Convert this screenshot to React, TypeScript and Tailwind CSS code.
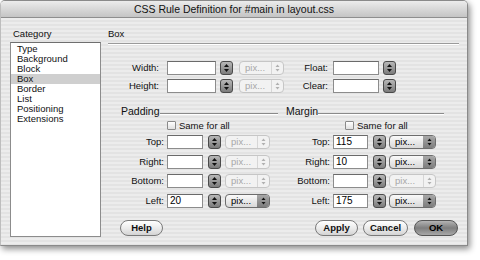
import React from 'react';

const categories = ['Type', 'Background', 'Block', 'Box', 'Border', 'List', 'Positioning', 'Extensions'];

function Spinner() {
  return (
    <div className="w-[13px] h-[14px] shrink-0 rounded-[3px] border border-[#4a4a4a] bg-gradient-to-b from-[#b8b8b8] to-[#7c7c7c] flex items-center justify-center">
      <svg width="7" height="10" viewBox="0 0 7 10">
        <path d="M3.5 1 L6 4 L1 4 Z" fill="#111" />
        <path d="M3.5 9 L6 6 L1 6 Z" fill="#111" />
      </svg>
    </div>
  );
}

function Select({ enabled, w }: { enabled: boolean; w: string }) {
  return (
    <div
      className={`${w} h-[14px] shrink-0 rounded-[4px] border flex items-center ${
        enabled
          ? 'border-[#6d6d6d] bg-gradient-to-b from-[#fafafa] to-[#d8d8d8] text-black'
          : 'border-[#c6c6c6] bg-[#f2f2f2] text-[#a8a8a8]'
      }`}
    >
      <span className="flex-1 pl-[5px] text-[9.5px] leading-none">pix...</span>
      <div
        className={`w-[12px] h-full rounded-r-[3px] flex items-center justify-center ${
          enabled ? 'bg-gradient-to-b from-[#a8a8a8] to-[#7d7d7d]' : 'border-l border-[#d6d6d6]'
        }`}
      >
        <svg width="5" height="8" viewBox="0 0 5 8">
          <path d="M2.5 0.5 L4.5 3 L0.5 3 Z" fill={enabled ? '#111' : '#b0b0b0'} />
          <path d="M2.5 7.5 L4.5 5 L0.5 5 Z" fill={enabled ? '#111' : '#b0b0b0'} />
        </svg>
      </div>
    </div>
  );
}

function TextBox({ w, value }: { w: string; value?: string }) {
  return (
    <div className={`${w} h-[14px] shrink-0 bg-white border border-[#8c8c8c] border-t-[#6a6a6a] pl-[2px] text-[10px] leading-[12px] text-black`}>
      {value}
    </div>
  );
}

function Label({ w, text }: { w: string; text: string }) {
  return <div className={`${w} shrink-0 text-right text-[9.5px] leading-[14px] text-[#111]`}>{text}</div>;
}

function Button({ w, text, primary }: { w: string; text: string; primary?: boolean }) {
  return (
    <div
      className={`${w} h-[16px] rounded-full border flex items-center justify-center text-[9.5px] font-bold ${
        primary
          ? 'border-[#555] bg-gradient-to-b from-[#b4b4b4] via-[#7e7e7e] to-[#a8a8a8] text-black'
          : 'border-[#7a7a7a] bg-gradient-to-b from-[#ffffff] via-[#ececec] to-[#d4d4d4] text-[#111]'
      }`}
    >
      {text}
    </div>
  );
}

function BoxRow({ label, rowClass, padding, margin }: { label: string; rowClass: string; padding?: string; margin?: string }) {
  const padOn = padding !== undefined;
  const marOn = margin !== undefined;
  return (
    <div className={`flex items-center ${rowClass}`}>
      <Label w="w-[56px]" text={label} />
      <div className="w-[3px]" />
      <TextBox w="w-[36px]" value={padding} />
      <div className="w-[5px]" />
      <Spinner />
      <div className="w-[4px]" />
      <Select enabled={padOn} w="w-[45px]" />
      <div className="w-[7px]" />
      <Label w="w-[53px]" text={label} />
      <div className="w-[3px]" />
      <TextBox w="w-[35px]" value={margin} />
      <div className="w-[5px]" />
      <Spinner />
      <div className="w-[3px]" />
      <Select enabled={marOn} w="w-[47px]" />
    </div>
  );
}

export default function App() {
  return (
    <div className="w-[480px] h-[260px] bg-white font-['Liberation_Sans',Arial,sans-serif] overflow-hidden">
      <div className="w-[468px] h-[246px] flex flex-col border border-[#8a8a8a] border-l-[#bdbdbd] rounded-t-[5px] shadow-[2px_3px_6px_rgba(0,0,0,0.45)] overflow-hidden">
        {/* Title bar */}
        <div className="h-[17px] shrink-0 bg-gradient-to-b from-[#ececec] to-[#c4c4c4] border-b border-[#8e8e8e] flex items-center justify-center">
          <span className="text-[10.5px] leading-none text-[#111]">CSS Rule Definition for #main in layout.css</span>
        </div>

        {/* Body */}
        <div className="flex-1 flex bg-[#e9e9e9] bg-[image:repeating-linear-gradient(to_bottom,#ececec_0px,#ececec_2px,#e3e3e3_2px,#e3e3e3_4px)]">
          {/* Category */}
          <div className="ml-[9px] w-[91px] pt-[10px] flex flex-col">
            <div className="pl-[3px] h-[12px] text-[9.5px] leading-[12px] text-[#111]">Category</div>
            <div className="mt-[2px] h-[195px] bg-white border border-[#8c8c8c] border-t-[#6f6f6f] pt-[1px]">
              {categories.map((c) => (
                <div
                  key={c}
                  className={`h-[10px] pl-[6px] text-[9.5px] leading-[10px] text-[#111] ${c === 'Box' ? 'bg-[#cfcfcf]' : ''}`}
                >
                  {c}
                </div>
              ))}
            </div>
          </div>

          {/* Box panel */}
          <div className="ml-[7px] w-[351px] pt-[10px] flex flex-col">
            <div className="h-[12px] text-[9.5px] leading-[12px] text-[#111]">Box</div>
            <div className="mt-[3px] h-[2px] border-t border-[#9a9a9a] border-b border-b-white" />

            {/* Width / Height / Float / Clear */}
            <div className="mt-[16px] flex items-center">
              <Label w="w-[51px]" text="Width:" />
              <div className="w-[8px]" />
              <TextBox w="w-[49px]" />
              <div className="w-[4px]" />
              <Spinner />
              <div className="w-[6px]" />
              <Select enabled={false} w="w-[45px]" />
              <Label w="w-[44px]" text="Float:" />
              <div className="w-[5px]" />
              <TextBox w="w-[46px]" />
              <div className="w-[4px]" />
              <Spinner />
            </div>
            <div className="mt-[4px] flex items-center">
              <Label w="w-[51px]" text="Height:" />
              <div className="w-[8px]" />
              <TextBox w="w-[49px]" />
              <div className="w-[4px]" />
              <Spinner />
              <div className="w-[6px]" />
              <Select enabled={false} w="w-[45px]" />
              <Label w="w-[44px]" text="Clear:" />
              <div className="w-[5px]" />
              <TextBox w="w-[46px]" />
              <div className="w-[4px]" />
              <Spinner />
            </div>

            {/* Section headings */}
            <div className="mt-[11px] h-[14px] flex">
              <div className="w-[170px] pl-[13px] flex items-end">
                <span className="text-[10.5px] leading-[14px] font-medium text-[#111]">Padding</span>
                <div className="flex-1 mb-[3px] h-[2px] border-t border-[#8a8a8a] border-b border-b-white" />
              </div>
              <div className="w-[166px] pl-[8px] flex items-end">
                <span className="text-[10.5px] leading-[14px] font-medium text-[#111]">Margin</span>
                <div className="flex-1 mb-[3px] h-[2px] border-t border-[#8a8a8a] border-b border-b-white" />
              </div>
            </div>

            {/* Same for all */}
            <div className="mt-[3px] h-[9px] flex items-center">
              <div className="w-[59px]" />
              <div className="w-[9px] h-[9px] border border-[#8a8a8a] bg-gradient-to-b from-white to-[#e0e0e0] rounded-[1px]" />
              <span className="ml-[3px] w-[96px] text-[9.5px] leading-none text-[#111]">Same for all</span>
              <div className="w-[70px]" />
              <div className="w-[9px] h-[9px] border border-[#8a8a8a] bg-gradient-to-b from-white to-[#e0e0e0] rounded-[1px]" />
              <span className="ml-[3px] text-[9.5px] leading-none text-[#111]">Same for all</span>
            </div>

            <BoxRow label="Top:" rowClass="mt-[5px]" margin="115" />
            <BoxRow label="Right:" rowClass="mt-[6px]" margin="10" />
            <BoxRow label="Bottom:" rowClass="mt-[5px]" />
            <BoxRow label="Left:" rowClass="mt-[6px]" padding="20" margin="175" />

            {/* Buttons */}
            <div className="mt-[12px] flex">
              <div className="w-[12px]" />
              <Button w="w-[43px]" text="Help" />
              <div className="w-[152px]" />
              <Button w="w-[43px]" text="Apply" />
              <div className="w-[5px]" />
              <Button w="w-[45px]" text="Cancel" />
              <div className="w-[6px]" />
              <Button w="w-[44px]" text="OK" primary />
            </div>
          </div>
        </div>
      </div>
    </div>
  );
}
